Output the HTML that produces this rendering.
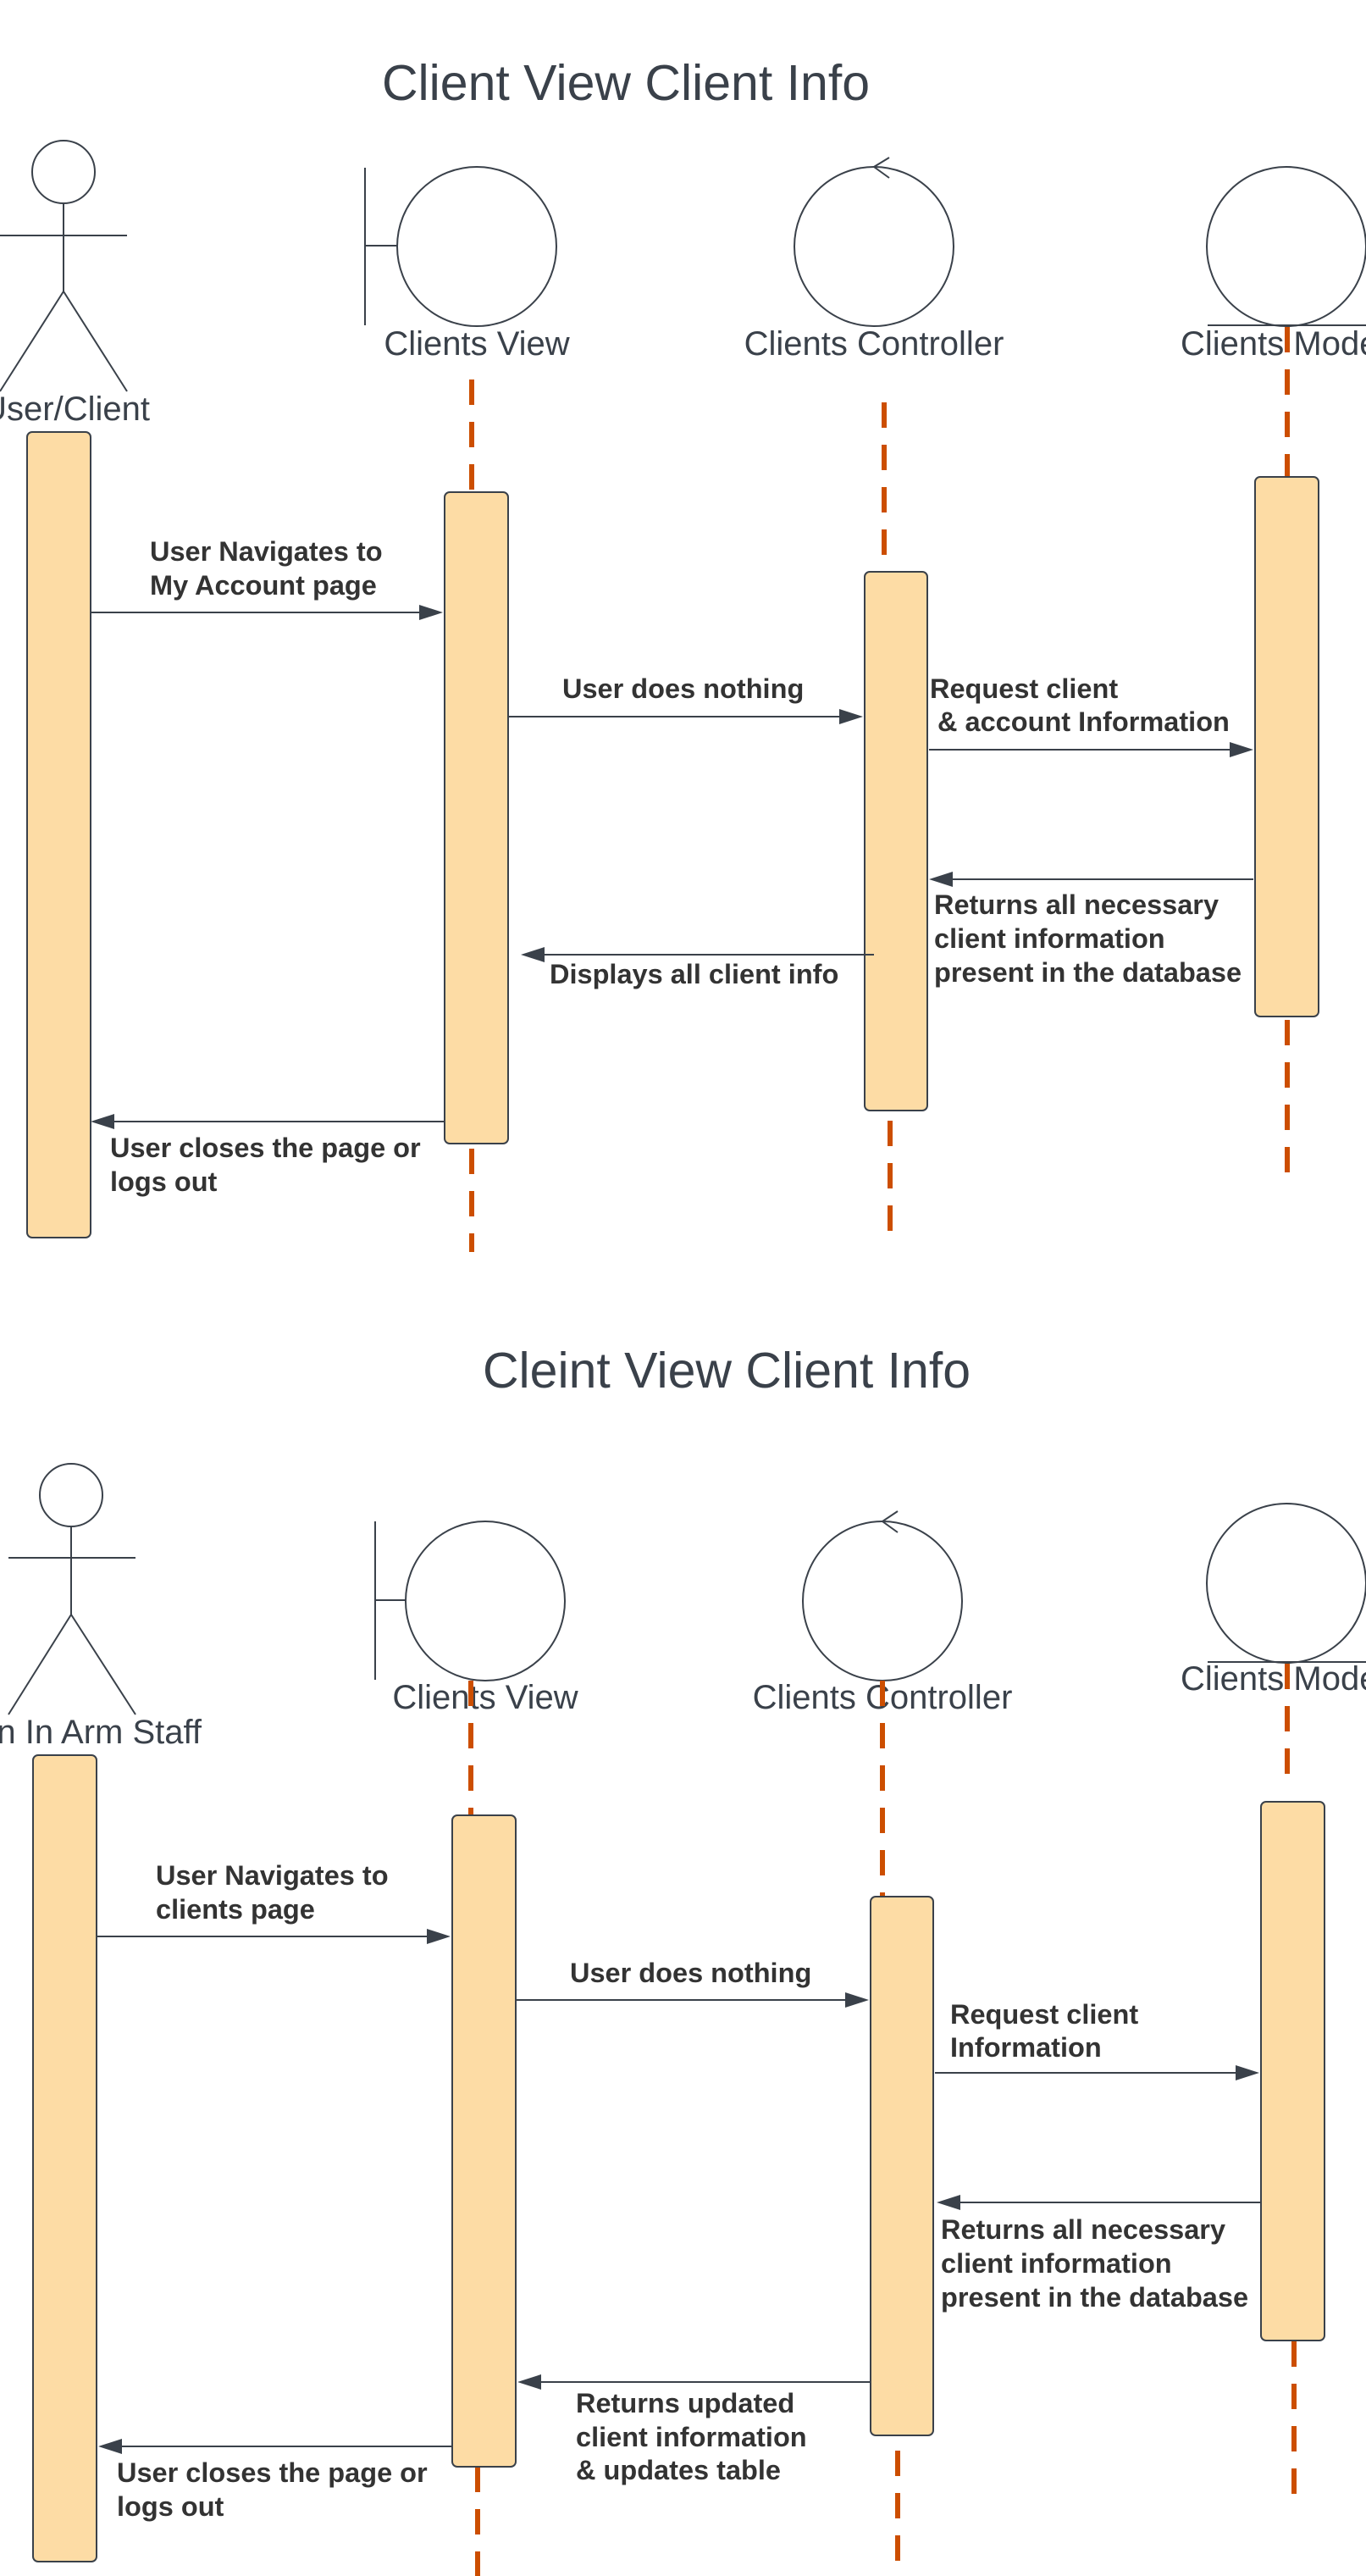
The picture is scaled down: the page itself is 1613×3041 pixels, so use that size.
<!DOCTYPE html>
<html><head><meta charset="utf-8"><style>
html,body{margin:0;padding:0;background:#fff;}
svg{display:block;}
.t{font-family:"Liberation Sans",sans-serif;fill:#3a414a;}
.b{font-family:"Liberation Sans",sans-serif;font-weight:bold;font-size:32.5px;fill:#333}
.s{stroke:#3a414a;stroke-width:2;fill:none}
.box{fill:#fddca5;stroke:#3a414a;stroke-width:2}
.ll{stroke:#cc4e00;stroke-width:6;stroke-dasharray:30 20;fill:none}
.ah{fill:#3a414a}
</style></head><body>
<svg width="1613" height="3041" viewBox="0 0 1613 3041" xmlns="http://www.w3.org/2000/svg">
<text class="t" x="739" y="118" font-size="59" text-anchor="middle">Client View Client Info</text>
<circle class="s" cx="75" cy="203" r="37"/>
<line class="s" x1="75" y1="240" x2="75" y2="344"/>
<line class="s" x1="0" y1="278" x2="150" y2="278"/>
<line class="s" x1="75" y1="344" x2="0" y2="462"/>
<line class="s" x1="75" y1="344" x2="150" y2="462"/>
<text class="t" x="177" y="496" font-size="40" text-anchor="end">User/Client</text>
<line class="s" x1="431" y1="198" x2="431" y2="384"/>
<line class="s" x1="431" y1="290" x2="469" y2="290"/>
<circle class="s" cx="563" cy="291" r="94"/>
<text class="t" x="563" y="419" font-size="40" text-anchor="middle">Clients View</text>
<circle class="s" cx="1032" cy="291" r="94"/>
<polyline class="s" points="1050,186 1032,197 1050,210"/>
<text class="t" x="1032" y="419" font-size="40" text-anchor="middle">Clients Controller</text>
<circle class="s" cx="1519" cy="291" r="94"/>
<line class="s" x1="1426" y1="384" x2="1613" y2="384"/>
<text class="t" x="1394" y="419" font-size="40">Clients Model</text>
<line class="ll" x1="557" y1="448" x2="557" y2="581"/>
<line class="ll" x1="557" y1="1356" x2="557" y2="1478"/>
<line class="ll" x1="1044" y1="475" x2="1044" y2="675"/>
<line class="ll" x1="1051" y1="1323" x2="1051" y2="1461"/>
<line class="ll" x1="1520" y1="386" x2="1520" y2="563"/>
<line class="ll" x1="1520" y1="1204" x2="1520" y2="1386"/>
<rect class="box" x="32" y="510" width="75" height="951" rx="6"/>
<rect class="box" x="525" y="581" width="75" height="769" rx="6"/>
<rect class="box" x="1021" y="675" width="74" height="636" rx="6"/>
<rect class="box" x="1482" y="563" width="75" height="637" rx="6"/>
<line class="s" x1="107" y1="723" x2="500" y2="723"/><polygon class="ah" points="523,723 495,714 495,732"/>
<text class="b" x="177" y="662">User Navigates to</text><text class="b" x="177" y="702">My Account page</text>
<line class="s" x1="600" y1="846" x2="996" y2="846"/><polygon class="ah" points="1019,846 991,837 991,855"/>
<text class="b" x="664" y="824">User does nothing</text>
<line class="s" x1="1097" y1="885" x2="1458" y2="885"/><polygon class="ah" points="1480,885 1452,876 1452,894"/>
<text class="b" x="1098" y="824">Request client</text><text class="b" x="1098" y="863">&#160;&amp; account Information</text>
<line class="s" x1="1120" y1="1038" x2="1480" y2="1038"/><polygon class="ah" points="1097,1038 1125,1029 1125,1047"/>
<text class="b" x="1103" y="1079">Returns all necessary</text><text class="b" x="1103" y="1119">client information</text><text class="b" x="1103" y="1159">present in the database</text>
<line class="s" x1="638" y1="1127" x2="1032" y2="1127"/><polygon class="ah" points="615,1127 643,1118 643,1136"/>
<text class="b" x="649" y="1161">Displays all client info</text>
<line class="s" x1="130" y1="1324" x2="525" y2="1324"/><polygon class="ah" points="107,1324 135,1315 135,1333"/>
<text class="b" x="130" y="1366">User closes the page or</text><text class="b" x="130" y="1406">logs out</text>

<text class="t" x="858" y="1638" font-size="59" text-anchor="middle">Cleint View Client Info</text>
<circle class="s" cx="84" cy="1765" r="37"/>
<line class="s" x1="84" y1="1802" x2="84" y2="1906"/>
<line class="s" x1="10" y1="1839" x2="160" y2="1839"/>
<line class="s" x1="84" y1="1906" x2="10" y2="2024"/>
<line class="s" x1="84" y1="1906" x2="160" y2="2024"/>
<text class="t" x="238" y="2058" font-size="40" text-anchor="end">Man In Arm Staff</text>
<line class="s" x1="443" y1="1796" x2="443" y2="1983"/>
<line class="s" x1="443" y1="1889" x2="480" y2="1889"/>
<circle class="s" cx="573" cy="1890" r="94"/>
<text class="t" x="573" y="2017" font-size="40" text-anchor="middle">Clients View</text>
<circle class="s" cx="1042" cy="1890" r="94"/>
<polyline class="s" points="1060,1784 1042,1796 1060,1809"/>
<text class="t" x="1042" y="2017" font-size="40" text-anchor="middle">Clients Controller</text>
<circle class="s" cx="1519" cy="1869" r="94"/>
<line class="s" x1="1426" y1="1962" x2="1613" y2="1962"/>
<text class="t" x="1394" y="1995" font-size="40">Clients Model</text>
<line class="ll" x1="556" y1="1984" x2="556" y2="2143"/>
<line class="ll" x1="564" y1="2912" x2="564" y2="3041"/>
<line class="ll" x1="1042" y1="1984" x2="1042" y2="2238"/>
<line class="ll" x1="1060" y1="2893" x2="1060" y2="3024"/>
<line class="ll" x1="1520" y1="1964" x2="1520" y2="2102"/>
<line class="ll" x1="1528" y1="2764" x2="1528" y2="2949"/>
<rect class="box" x="39" y="2072" width="75" height="952" rx="6"/>
<rect class="box" x="534" y="2143" width="75" height="769" rx="6"/>
<rect class="box" x="1028" y="2239" width="74" height="636" rx="6"/>
<rect class="box" x="1489" y="2127" width="75" height="636" rx="6"/>
<line class="s" x1="114" y1="2286" x2="510" y2="2286"/><polygon class="ah" points="532,2286 504,2277 504,2295"/>
<text class="b" x="184" y="2225">User Navigates to</text><text class="b" x="184" y="2265">clients page</text>
<line class="s" x1="609" y1="2361" x2="1004" y2="2361"/><polygon class="ah" points="1026,2361 998,2352 998,2370"/>
<text class="b" x="673" y="2340">User does nothing</text>
<line class="s" x1="1104" y1="2447" x2="1465" y2="2447"/><polygon class="ah" points="1487,2447 1459,2438 1459,2456"/>
<text class="b" x="1122" y="2389">Request client</text><text class="b" x="1122" y="2428">Information</text>
<line class="s" x1="1128" y1="2600" x2="1489" y2="2600"/><polygon class="ah" points="1106,2600 1134,2591 1134,2609"/>
<text class="b" x="1111" y="2643">Returns all necessary</text><text class="b" x="1111" y="2683">client information</text><text class="b" x="1111" y="2723">present in the database</text>
<line class="s" x1="634" y1="2812" x2="1028" y2="2812"/><polygon class="ah" points="611,2812 639,2803 639,2821"/>
<text class="b" x="680" y="2848">Returns updated</text><text class="b" x="680" y="2888">client information</text><text class="b" x="680" y="2927">&amp; updates table</text>
<line class="s" x1="138" y1="2888" x2="534" y2="2888"/><polygon class="ah" points="116,2888 144,2879 144,2897"/>
<text class="b" x="138" y="2930">User closes the page or</text><text class="b" x="138" y="2970">logs out</text>
</svg>
</body></html>
